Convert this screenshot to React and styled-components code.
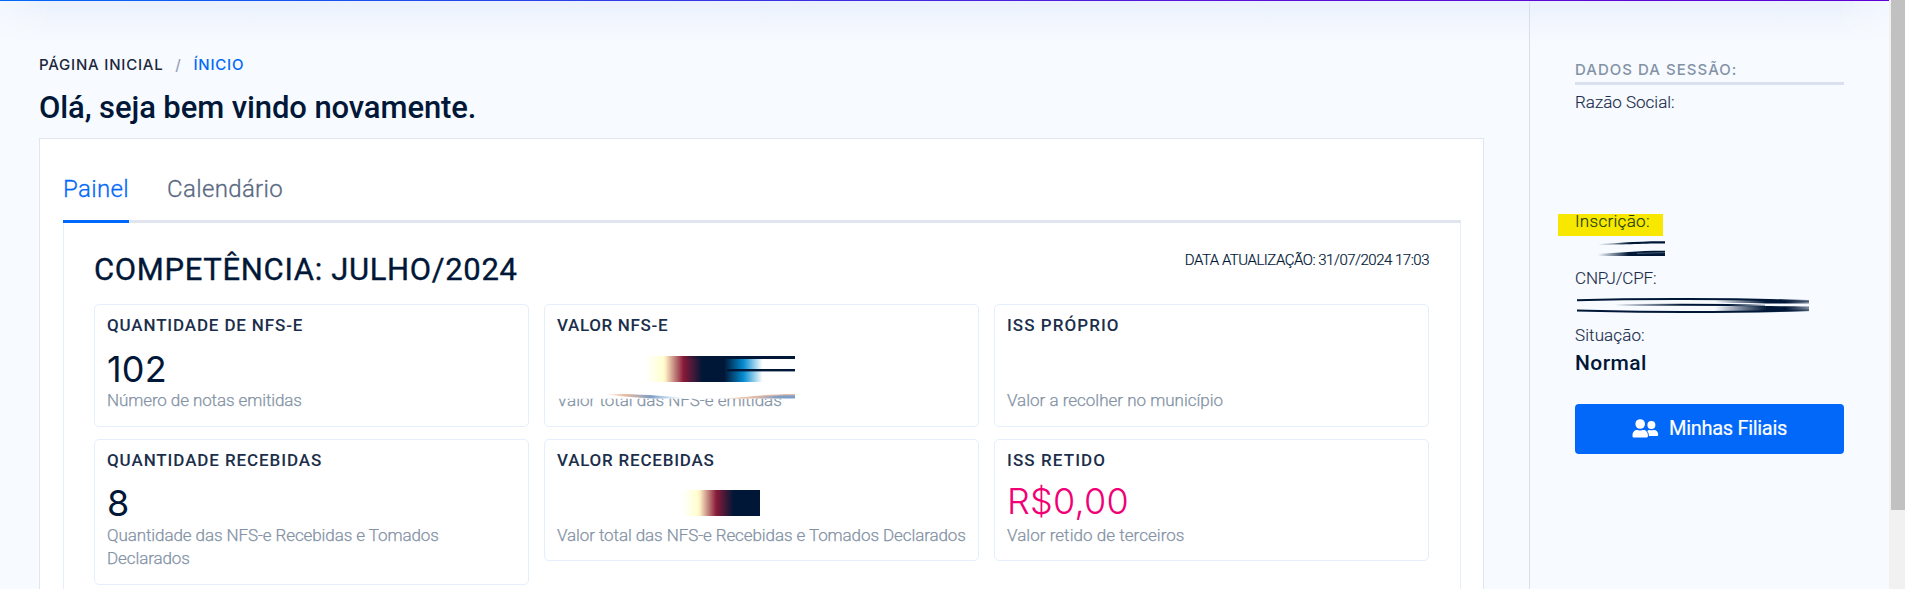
import React from "react";
import styled, { createGlobalStyle } from "styled-components";

const sans = `Roboto, "Noto Sans", "Liberation Sans", sans-serif`;
const inter = `Inter, "Liberation Sans", sans-serif`;
const navy = "#001737";

const Global = createGlobalStyle`
  * { box-sizing: border-box; }
  html, body { margin: 0; height: 100%; overflow: hidden; background: #f7faff; }
  body { font-family: ${sans}; color: ${navy}; }
`;

const Screen = styled.div`
  display: flex;
  height: 589px;
  overflow: hidden;
`;

const Page = styled.div`
  position: relative;
  flex: 1;
  display: flex;
  flex-direction: column;
  min-width: 0;
  background: #f7faff;
`;

const TopLine = styled.div`
  flex: none;
  height: 1px;
  margin-bottom: 1px;
  background: linear-gradient(90deg, #0168fa, #5b12d9 65%, #5f00d8);
`;

const TopShade = styled.div`
  position: absolute;
  top: 1px;
  left: 0;
  right: 0;
  height: 42px;
  pointer-events: none;
  background: linear-gradient(rgba(1, 80, 220, 0.055), rgba(20, 60, 140, 0.018) 50%, rgba(20, 60, 140, 0));
  mask-image: linear-gradient(90deg, rgba(0, 0, 0, 0.3), #000 50px, #000 calc(100% - 50px), rgba(0, 0, 0, 0.3));
`;

const Columns = styled.div`
  flex: 1;
  display: flex;
  min-height: 0;
`;

const Main = styled.main`
  width: 1529px;
  padding: 52px 45px 0 39px;
`;

const Breadcrumb = styled.nav`
  display: flex;
  font: 500 15px/21px ${inter};
  letter-spacing: 0.78px;
  color: #1c273c;
`;

const Crumb = styled.span`
  color: ${(p) => (p.$active ? "#0168fa" : "inherit")};
`;

const Slash = styled.span`
  width: 30px;
  text-align: center;
  color: #97a3b9;
`;

const Welcome = styled.h1`
  margin: 13px 0 10px;
  font-size: 31px;
  line-height: 40px;
  font-weight: 500;
  letter-spacing: -0.1px;
`;

const Card = styled.section`
  height: 600px;
  padding: 35px 22px 0 23px;
  border: 1px solid #e1e5ed;
  background: #fff;
`;

const Tabs = styled.div`
  display: flex;
  gap: 38px;
  border-bottom: 3px solid #e1e5ed;
`;

const Tab = styled.span`
  height: 49px;
  margin-bottom: -3px;
  border-bottom: 3px solid ${(p) => (p.$active ? "#0168fa" : "transparent")};
  color: ${(p) => (p.$active ? "#0168fa" : "#596882")};
  font-size: 24px;
  font-weight: 300;
  -webkit-text-stroke: 0.3px currentColor;
  line-height: 30px;
  letter-spacing: ${(p) => p.$spacing}px;
`;

const Panel = styled.div`
  height: 500px;
  padding: 28px 31px 0 30px;
  border: 1px solid #e5eefc;
  border-top: 0;
`;

const PanelHeader = styled.header`
  display: flex;
  justify-content: space-between;
  height: 53px;
`;

const Period = styled.h2`
  margin: 1px 0 0;
  font-size: 31px;
  line-height: 36px;
  font-weight: 400;
  -webkit-text-stroke: 0.35px currentColor;
  letter-spacing: 0.66px;
`;

const Updated = styled.span`
  font-size: 15px;
  font-weight: 300;
  -webkit-text-stroke: 0.2px currentColor;
  line-height: 18px;
  letter-spacing: -0.49px;
`;

const Grid = styled.div`
  display: grid;
  grid-template-columns: repeat(3, 435px);
  gap: 12px 15px;
  align-items: start;
`;

const Stat = styled.article`
  position: relative;
  padding: 10px 12px ${(p) => p.$bottom}px;
  border: 1px solid #e5eefc;
  border-radius: 5px;
`;

const StatTitle = styled.h3`
  margin: 0;
  color: #1b2e4b;
  font-size: 17px;
  font-weight: 500;
  line-height: 20px;
  letter-spacing: ${(p) => p.$spacing}px;
`;

const StatValue = styled.div`
  height: 54px;
  padding-top: ${(p) => p.$top}px;
  color: ${(p) => (p.$pink ? "#f10075" : navy)};
  font: ${(p) => (p.$pink ? 300 : 400)} 36px/40px ${inter};
  letter-spacing: 0.2px;
`;

const StatNote = styled.p`
  margin: 0;
  color: #8392a5;
  font-size: 17px;
  font-weight: 300;
  -webkit-text-stroke: 0.25px currentColor;
  line-height: 23px;
  letter-spacing: ${(p) => p.$spacing}px;
`;

const StatSmear = styled.svg`
  position: absolute;
  left: 12px;
  top: 50px;
`;

const Sidebar = styled.aside`
  isolation: isolate;
  flex: 1;
  padding: 58px 45px 0;
  border-left: 1px solid #d9dfe9;
`;

const SideTitle = styled.h4`
  margin: 0 0 6px;
  padding-bottom: 2px;
  border-bottom: 3px solid #d9e1ee;
  color: #8392a5;
  font: 500 15px/20px ${inter};
  letter-spacing: 1.02px;
`;

const Field = styled.div`
  height: ${(p) => p.$height}px;
`;

const FieldLabel = styled.div`
  position: relative;
  width: max-content;
  color: #1b2e4b;
  font-size: 17px;
  font-weight: 300;
  -webkit-text-stroke: 0.15px currentColor;
  line-height: 22px;
  letter-spacing: ${(p) => p.$spacing || 0}px;
`;

const Marked = styled(FieldLabel)`
  color: #1c3d0e;
  &::before {
    content: "";
    position: absolute;
    z-index: -1;
    left: -17px;
    top: 3.5px;
    width: 105px;
    height: 22px;
    background: #f8e800;
  }
`;

const FieldValue = styled.div`
  margin-top: 4px;
  font-size: 21px;
  font-weight: 500;
  line-height: 26px;
  letter-spacing: 0.45px;
`;

const FieldSmear = styled.svg`
  display: block;
  margin-top: 9px;
`;

const Button = styled.button`
  display: flex;
  justify-content: center;
  align-items: center;
  gap: 10px;
  width: 100%;
  height: 50px;
  padding: 0 0 2px;
  border: 0;
  border-radius: 4px;
  background: #0168fa;
  color: #fff;
  font: 400 20px/30px ${sans};
  -webkit-text-stroke: 0.2px currentColor;
  letter-spacing: -0.3px;
`;

const ScrollTrack = styled.div`
  width: 16px;
  padding-left: 2px;
  background: #f1f1f1;
`;

const ScrollThumb = styled.div`
  height: 510px;
  background: #c1c1c1;
`;

function ValueSmear() {
  return (
    <StatSmear width="240" height="46" viewBox="0 0 240 46">
      <defs>
        <linearGradient id="vs" x1="88" x2="208" y1="0" y2="0" gradientUnits="userSpaceOnUse">
          <stop offset="0" stopColor="#fff" />
          <stop offset="0.15" stopColor="#ffffd2" />
          <stop offset="0.17" stopColor="#fdf0c4" />
          <stop offset="0.32" stopColor="#8a1a38" />
          <stop offset="0.48" stopColor="#001737" />
          <stop offset="0.66" stopColor="#001737" />
          <stop offset="0.82" stopColor="#048bd0" />
          <stop offset="0.98" stopColor="#fff" />
        </linearGradient>
        <linearGradient id="vl">
          <stop offset="0" stopColor={navy} stopOpacity="0" />
          <stop offset="0.35" stopColor={navy} />
        </linearGradient>
        <linearGradient id="vc">
          <stop offset="0" stopColor="#f3b994" stopOpacity="0" />
          <stop offset="0.25" stopColor="#e5b8a0" />
          <stop offset="0.55" stopColor="#7f9fc6" />
          <stop offset="1" stopColor="#b9e3fb" stopOpacity="0" />
        </linearGradient>
        <linearGradient id="vd">
          <stop offset="0" stopColor="#fff0d0" stopOpacity="0.4" />
          <stop offset="0.4" stopColor="#e3bba9" />
          <stop offset="0.75" stopColor="#809ec4" />
          <stop offset="1" stopColor="#809ec4" />
        </linearGradient>
      </defs>
      <rect y="28" width="238" height="15.7" fill="#fff" />
      <rect x="88" y="1" width="120" height="26" fill="url(#vs)" />
      <rect x="125" y="1" width="113" height="3" fill="url(#vl)" />
      <rect x="170" y="14" width="68" height="2.4" fill={navy} />
      <path d="M48 39.2C70 38.6 100 40 132 43.6H98C80 42.6 60 41 48 39.2Z" fill="url(#vc)" />
      <path d="M170 43.5C190 42 210 39 238 39V40.5C220 41 200 43 190 43.5Z" fill="#e3bba9" />
      <path d="M170 43.6C195 42.5 215 40.2 238 40.2V43.6Z" fill="url(#vd)" />
    </StatSmear>
  );
}

function ReceivedSmear() {
  return (
    <StatSmear width="210" height="30" viewBox="0 0 210 30">
      <defs>
        <linearGradient id="rs" x1="125" x2="203" y1="0" y2="0" gradientUnits="userSpaceOnUse">
          <stop offset="0" stopColor="#fff" />
          <stop offset="0.19" stopColor="#ffffd2" />
          <stop offset="0.23" stopColor="#fdf0c4" />
          <stop offset="0.44" stopColor="#8a1a38" />
          <stop offset="0.66" stopColor="#001737" />
        </linearGradient>
      </defs>
      <rect x="125" width="78" height="26" fill="url(#rs)" />
    </StatSmear>
  );
}

function RegistrationSmear() {
  return (
    <FieldSmear width="90" height="15" viewBox="0 0 90 15">
      <defs>
        <linearGradient id="ra" x1="10" x2="90" y1="0" y2="0" gradientUnits="userSpaceOnUse">
          <stop offset="0.16" stopColor={navy} stopOpacity="0" />
          <stop offset="0.55" stopColor={navy} />
        </linearGradient>
      </defs>
      <path d="M10 3.8C40 2.6 60 0 90 0.2V2.6C65 2.5 50 4 10 3.9Z" fill="url(#ra)" />
      <path d="M20 13C45 12 65 9.6 90 9.8V15H20Z" fill="url(#ra)" />
      <path d="M62 12.4L90 11.6" stroke="#f7faff" strokeOpacity="0.5" strokeWidth="0.6" />
    </FieldSmear>
  );
}

function DocumentSmear() {
  return (
    <FieldSmear width="234" height="15" viewBox="0 0 234 15">
      <defs>
        <linearGradient id="da" x1="40" x2="190" y1="0" y2="0" gradientUnits="userSpaceOnUse">
          <stop offset="0" stopColor={navy} stopOpacity="0" />
          <stop offset="0.45" stopColor={navy} />
          <stop offset="0.75" stopColor={navy} />
          <stop offset="1" stopColor={navy} stopOpacity="0.4" />
        </linearGradient>
        <linearGradient id="db" x1="140" x2="234" y1="0" y2="0" gradientUnits="userSpaceOnUse">
          <stop offset="0" stopColor={navy} stopOpacity="0" />
          <stop offset="0.55" stopColor={navy} />
          <stop offset="0.75" stopColor={navy} />
          <stop offset="1" stopColor={navy} stopOpacity="0.5" />
        </linearGradient>
        <linearGradient id="dc" x1="0" x2="234" y1="0" y2="0" gradientUnits="userSpaceOnUse">
          <stop offset="0.85" stopColor={navy} />
          <stop offset="1" stopColor={navy} stopOpacity="0.35" />
        </linearGradient>
      </defs>
      <path d="M2 2.2C60 0.6 160 0.4 234 3" fill="none" stroke="url(#dc)" strokeWidth="2" />
      <path d="M2 12.6C60 14.4 160 14.6 234 12.2" fill="none" stroke="url(#dc)" strokeWidth="2" />
      <path d="M40 7C100 6.6 150 6.4 190 7.6" fill="none" stroke="url(#da)" strokeWidth="1.8" />
      <path d="M140 2C170 1.4 210 2 234 2.6V5.4C210 5.4 180 5.6 140 4.4Z" fill="url(#db)" />
      <path d="M140 8.6C170 7.8 210 8.2 234 8.4V13C200 13.6 170 13.6 140 13Z" fill="url(#db)" />
    </FieldSmear>
  );
}

function PeopleIcon() {
  return (
    <svg width="27" height="19" viewBox="0 0 27 19" fill="#fff">
      <circle cx="8.2" cy="5" r="4.8" />
      <path d="M0.5 16.3C0.5 12.9 2.6 10.9 5.2 10.9C6.2 10.9 6.8 11.4 8.2 11.4C9.6 11.4 10.2 10.9 11.2 10.9C13.9 10.9 15.9 12.9 15.9 16.3V17C15.9 18 15.2 18.6 14.3 18.6H2.1C1.2 18.6 0.5 18 0.5 17Z" />
      <circle cx="19.4" cy="6" r="4" />
      <path d="M15.2 11.9C15.9 11.3 16.6 11 17.4 11C18.1 11 18.6 11.3 19.5 11.3C20.4 11.3 20.9 11 21.7 11C24.4 11 26.2 12.9 26.2 15.4C26.2 16.4 25.6 16.9 24.7 16.9H16.9C16.9 14.8 16.4 13.1 15.2 11.9Z" />
    </svg>
  );
}

const stats = [
  { title: "QUANTIDADE DE NFS-E", ts: 0.85, value: "102", top: 14, note: "Número de notas emitidas", ns: -0.1, bottom: 14 },
  { title: "VALOR NFS-E", ts: 0.65, top: 14, note: "Valor total das NFS-e emitidas", ns: 0, smear: <ValueSmear />, bottom: 14 },
  { title: "ISS PRÓPRIO", ts: 1.05, top: 14, note: "Valor a recolher no município", ns: 0, bottom: 14 },
  { title: "QUANTIDADE RECEBIDAS", ts: 0.9, value: "8", top: 13, note: "Quantidade das NFS-e Recebidas e Tomados Declarados", ns: -0.09, bottom: 14 },
  { title: "VALOR RECEBIDAS", ts: 0.78, top: 14, note: "Valor total das NFS-e Recebidas e Tomados Declarados", ns: -0.09, smear: <ReceivedSmear />, bottom: 13 },
  { title: "ISS RETIDO", ts: 1.1, value: "R$0,00", pink: true, top: 11, note: "Valor retido de terceiros", ns: 0.04, bottom: 13 },
];

export default function App() {
  return (
    <Screen>
      <Global />
      <Page>
        <TopLine />
        <TopShade />
        <Columns>
          <Main>
            <Breadcrumb>
              <Crumb>PÁGINA INICIAL</Crumb>
              <Slash>/</Slash>
              <Crumb $active>ÍNICIO</Crumb>
            </Breadcrumb>
            <Welcome>Olá, seja bem vindo novamente.</Welcome>
            <Card>
              <Tabs>
                <Tab $active $spacing={0.35}>Painel</Tab>
                <Tab $spacing={0.35}>Calendário</Tab>
              </Tabs>
              <Panel>
                <PanelHeader>
                  <Period>COMPETÊNCIA: JULHO/2024</Period>
                  <Updated>DATA ATUALIZAÇÃO: 31/07/2024 17:03</Updated>
                </PanelHeader>
                <Grid>
                  {stats.map((s) => (
                    <Stat key={s.title} $bottom={s.bottom}>
                      <StatTitle $spacing={s.ts}>{s.title}</StatTitle>
                      <StatValue $top={s.top} $pink={s.pink}>{s.value}</StatValue>
                      <StatNote $spacing={s.ns}>{s.note}</StatNote>
                      {s.smear}
                    </Stat>
                  ))}
                </Grid>
              </Panel>
            </Card>
          </Main>
          <Sidebar>
            <SideTitle>DADOS DA SESSÃO:</SideTitle>
            <Field $height={119}>
              <FieldLabel>Razão Social:</FieldLabel>
            </Field>
            <Field $height={57}>
              <Marked $spacing={0.3}>Inscrição:</Marked>
              <RegistrationSmear />
            </Field>
            <Field $height={57}>
              <FieldLabel $spacing={-0.15}>CNPJ/CPF:</FieldLabel>
              <DocumentSmear />
            </Field>
            <Field $height={80}>
              <FieldLabel $spacing={0.1}>Situação:</FieldLabel>
              <FieldValue>Normal</FieldValue>
            </Field>
            <Button>
              <PeopleIcon />
              Minhas Filiais
            </Button>
          </Sidebar>
        </Columns>
      </Page>
      <ScrollTrack>
        <ScrollThumb />
      </ScrollTrack>
    </Screen>
  );
}
